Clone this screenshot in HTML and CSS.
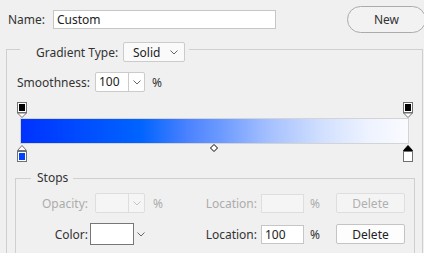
FILE: index.html
```html
<!DOCTYPE html>
<html lang="en">

<head>
    <meta charset="UTF-8">
    <title>Gradient Editor</title>
    <link rel="stylesheet" href="styles.css">
</head>

<body>
    <div class="top-row">
        <label class="name-label" for="gradName">Name:</label>
        <input class="name-input" type="text" id="gradName" value="Custom">
        <button class="new-btn" type="button">New</button>
    </div>

    <fieldset class="group outer">
        <legend class="outer-legend">
            <span class="legend-row">
                <span class="type-label">Gradient Type:</span>
                <span class="select solid">
                    <span class="select-val">Solid</span>
                    <svg class="chev" width="8" height="5" viewBox="0 0 8 5"><polyline points="0.5,0.5 4,4 7.5,0.5" /></svg>
                </span>
            </span>
        </legend>

        <div class="smooth-row">
            <span class="smooth-label">Smoothness:</span>
            <span class="combo">
                <span class="combo-val">100</span>
                <span class="combo-btn"><svg class="chev" width="8" height="5" viewBox="0 0 8 5"><polyline points="0.5,0.5 4,4 7.5,0.5" /></svg></span>
            </span>
            <span class="pct">%</span>
        </div>

        <div class="grad">
            <!-- opacity stops -->
            <svg class="stop stop-top left" width="10" height="16" viewBox="0 0 10 16">
                <rect x="0.5" y="0.5" width="9" height="10" fill="#fff" stroke="#707070" />
                <rect x="2" y="2" width="6" height="7" fill="#000" />
                <polygon points="0.5,11 9.5,11 5,15.5" fill="#fff" stroke="#707070" />
            </svg>
            <svg class="stop stop-top right" width="10" height="16" viewBox="0 0 10 16">
                <rect x="0.5" y="0.5" width="9" height="10" fill="#fff" stroke="#707070" />
                <rect x="2" y="2" width="6" height="7" fill="#000" />
                <polygon points="0.5,11 9.5,11 5,15.5" fill="#fff" stroke="#707070" />
            </svg>

            <div class="bar"></div>

            <!-- colour stops -->
            <svg class="stop stop-bottom left" width="10" height="17" viewBox="0 0 10 17">
                <polygon points="5,0.5 9.5,5.5 0.5,5.5" fill="#fff" stroke="#707070" />
                <rect x="0.5" y="6.5" width="9" height="10" fill="#fff" stroke="#707070" />
                <rect x="2" y="8" width="6" height="7" fill="#0040ff" />
            </svg>
            <svg class="stop stop-bottom right" width="10" height="17" viewBox="0 0 10 17">
                <polygon points="5,0.5 9.5,5.5 0.5,5.5" fill="#000" stroke="#000" />
                <rect x="0.5" y="6.5" width="9" height="10" fill="#fff" stroke="#707070" />
            </svg>
            <svg class="midpoint" width="8" height="8" viewBox="0 0 8 8">
                <polygon points="4,0.5 7.5,4 4,7.5 0.5,4" fill="#fff" stroke="#000" />
            </svg>
        </div>

        <fieldset class="group stops">
            <legend class="stops-legend">Stops</legend>

            <div class="stop-row disabled">
                <span class="lbl">Opacity:</span>
                <span class="combo">
                    <span class="combo-val"></span>
                    <span class="combo-btn"><svg class="chev" width="8" height="5" viewBox="0 0 8 5"><polyline points="0.5,0.5 4,4 7.5,0.5" /></svg></span>
                </span>
                <span class="pct">%</span>
                <span class="loc-label">Location:</span>
                <span class="loc-input"></span>
                <span class="pct loc-pct">%</span>
                <button class="del-btn" type="button" disabled>Delete</button>
            </div>

            <div class="stop-row color-row">
                <span class="lbl">Color:</span>
                <span class="color-pick">
                    <span class="swatch"></span>
                    <svg class="chev" width="8" height="5" viewBox="0 0 8 5"><polyline points="0.5,0.5 4,4 7.5,0.5" /></svg>
                </span>
                <span class="loc-label">Location:</span>
                <span class="loc-input">100</span>
                <span class="pct loc-pct">%</span>
                <button class="del-btn" type="button">Delete</button>
            </div>
        </fieldset>
    </fieldset>
</body>

</html>
```

FILE: styles.css
```css
body {
    margin: 0;
    padding: 0;
    width: 424px;
    height: 253px;
    overflow: hidden;
    font-family: "Segoe UI", "Noto Sans", sans-serif;
    font-size: 12px;
    color: #333;
    background-color: #f0f0f0;
}

.top-row {
    display: flex;
    align-items: center;
    height: 27px;
    padding: 6px 0 0 8px;
}

.name-label {
    width: 45px;
    flex-shrink: 0;
}

.name-input {
    width: 223px;
    height: 19px;
    flex-shrink: 0;
    box-sizing: border-box;
    margin: 0;
    padding: 0 3px;
    border: 1px solid #c6c6c6;
    background-color: #fff;
    font-family: inherit;
    font-size: 12px;
    color: #222;
    outline: none;
}

.new-btn {
    width: 79px;
    height: 27px;
    margin-left: 71px;
    flex-shrink: 0;
    border: 1px solid #ababab;
    border-radius: 14px;
    background-color: #f2f2f2;
    font-family: inherit;
    font-size: 12px;
    color: #333;
}

.group {
    margin: 0;
    padding: 0;
    border: 1px solid #cfcfcf;
    min-width: 0;
}

.outer {
    margin: 3px 1px 0 6px;
    padding: 0 7px 30px 8px;
}

.outer-legend {
    margin-left: 5px;
    padding: 6px 4px 0 16px;
}

.legend-row {
    display: flex;
    align-items: center;
    height: 20px;
}

.type-label {
    width: 87px;
}

.select {
    display: flex;
    align-items: center;
    justify-content: space-between;
    box-sizing: border-box;
    height: 20px;
    border: 1px solid #cbcbcb;
    border-radius: 2px;
    background-color: #fafafa;
    color: #222;
}

.solid {
    width: 62px;
    padding: 0 6px 0 9px;
}

.chev {
    display: block;
}

.chev polyline {
    fill: none;
    stroke: #666;
    stroke-width: 1;
}

.smooth-row {
    display: flex;
    align-items: center;
    height: 20px;
    margin-top: 10px;
    padding-left: 2px;
}

.smooth-label {
    width: 78px;
}

.combo {
    display: flex;
    flex-shrink: 0;
    box-sizing: border-box;
    width: 50px;
    height: 20px;
    border: 1px solid #cbcbcb;
    border-radius: 2px;
    background-color: #fff;
    color: #222;
}

.combo-val {
    flex: 1;
    padding-left: 3px;
    line-height: 18px;
}

.combo-btn {
    display: flex;
    align-items: center;
    justify-content: center;
    width: 15px;
    border-left: 1px solid #cbcbcb;
}

.pct {
    width: 12px;
    flex-shrink: 0;
    margin-left: 8px;
}

.smooth-row .pct {
    margin-left: 7px;
}

.grad {
    position: relative;
    height: 44px;
    margin: 10px 2px 0;
    padding-top: 16px;
}

.bar {
    box-sizing: border-box;
    height: 26px;
    margin: 0 4px 0 3px;
    border: 1px solid #d4d4d4;
    background: linear-gradient(to right, #0032ff 0%, #0050ff 18%, #0064ff 31%, #4b82ff 43%, #6d9bff 52%, #a5c0ff 64%, #d2e0ff 78%, #eef3ff 90%, #fafbff 100%);
}

.stop {
    position: absolute;
    display: block;
}

.stop-top {
    top: 0;
}

.stop-bottom {
    top: 43px;
}

.stop.left {
    left: 0;
}

.stop.right {
    right: 0;
}

.midpoint {
    position: absolute;
    display: block;
    left: 193px;
    top: 42px;
}

.stops {
    margin-top: 8px;
    padding: 0 0 30px 0;
}

.stops-legend {
    margin-left: 15px;
    padding: 0 5px 0 6px;
    line-height: 16px;
}

.stop-row {
    display: flex;
    align-items: center;
    height: 20px;
    margin-top: 7px;
}

.color-row {
    height: 22px;
    margin-top: 10px;
}

.lbl {
    width: 72px;
    flex-shrink: 0;
    margin-right: 7px;
    text-align: right;
}

.color-row .lbl {
    margin-right: 2px;
}

.color-pick {
    display: flex;
    flex-shrink: 0;
    align-items: center;
    width: 75px;
}

.swatch {
    box-sizing: border-box;
    width: 44px;
    height: 22px;
    border: 1px solid #777;
    background-color: #fff;
    margin-right: 3px;
}

.loc-label {
    width: 92px;
    flex-shrink: 0;
    text-align: right;
}

.loc-input {
    box-sizing: border-box;
    width: 43px;
    height: 19px;
    flex-shrink: 0;
    margin-left: 4px;
    padding-left: 3px;
    border: 1px solid #c6c6c6;
    background-color: #fff;
    line-height: 17px;
    color: #222;
}

.loc-pct {
    margin-left: 6px;
}

.del-btn {
    box-sizing: border-box;
    width: 69px;
    height: 20px;
    flex-shrink: 0;
    margin-left: 14px;
    padding: 0;
    border: 1px solid #c4c4c4;
    border-radius: 2px;
    background-color: #fdfdfd;
    font-family: inherit;
    font-size: 12px;
    color: #222;
}

.disabled {
    color: #acacac;
}

.disabled .combo,
.disabled .loc-input {
    border-color: #dedede;
    background-color: #f5f5f5;
}

.disabled .combo-btn {
    border-left-color: #dedede;
}

.disabled .chev polyline {
    stroke: #c4c4c4;
}

.disabled .del-btn {
    border-color: #dedede;
    background-color: #f4f4f4;
    color: #b0b0b0;
}
```
